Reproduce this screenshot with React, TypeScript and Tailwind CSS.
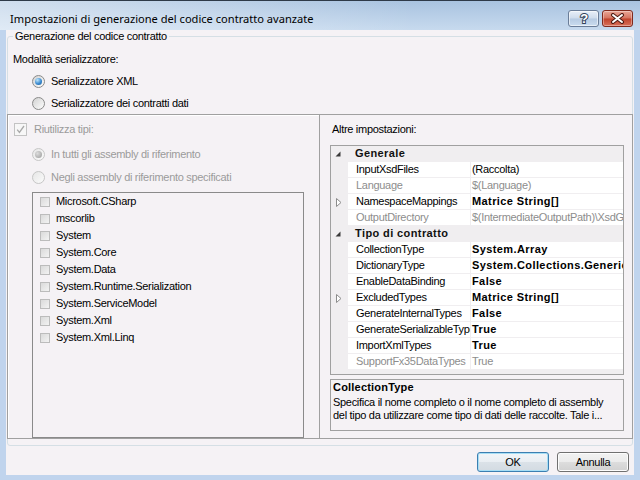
import React from "react";

function Radio({ checked = false, disabled = false }: { checked?: boolean; disabled?: boolean }) {
  return (
    <span
      className={`w-[13px] h-[13px] shrink-0 rounded-full border flex items-center justify-center ${
        disabled
          ? "border-[#c6c6c6] bg-[linear-gradient(135deg,#e6e6e6,#fbfbfb)]"
          : "border-[#8a8a8a] bg-[linear-gradient(135deg,#d2d2d2,#fdfdfd)]"
      }`}
    >
      {checked && (
        <span
          className={`w-[7px] h-[7px] rounded-full ${
            disabled
              ? "bg-[radial-gradient(circle_at_35%_35%,#dcdcdc,#9a9a9a)]"
              : "bg-[radial-gradient(circle_at_35%_30%,#bfe7fc,#3b8ad0_55%,#1a5a95)]"
          }`}
        />
      )}
    </span>
  );
}

const assemblies = [
  "Microsoft.CSharp",
  "mscorlib",
  "System",
  "System.Core",
  "System.Data",
  "System.Runtime.Serialization",
  "System.ServiceModel",
  "System.Xml",
  "System.Xml.Linq",
];

type Row =
  | { cat: string }
  | { name: string; value: string; bold?: boolean; dis?: boolean; exp?: boolean };

const rows: Row[] = [
  { cat: "Generale" },
  { name: "InputXsdFiles", value: "(Raccolta)" },
  { name: "Language", value: "$(Language)", dis: true },
  { name: "NamespaceMappings", value: "Matrice String[]", bold: true, exp: true },
  { name: "OutputDirectory", value: "$(IntermediateOutputPath)\\XsdGeneratedCode", dis: true },
  { cat: "Tipo di contratto" },
  { name: "CollectionType", value: "System.Array", bold: true },
  { name: "DictionaryType", value: "System.Collections.Generic.Dictionary`2", bold: true },
  { name: "EnableDataBinding", value: "False", bold: true },
  { name: "ExcludedTypes", value: "Matrice String[]", bold: true, exp: true },
  { name: "GenerateInternalTypes", value: "False", bold: true },
  { name: "GenerateSerializableTypes", value: "True", bold: true },
  { name: "ImportXmlTypes", value: "True", bold: true },
  { name: "SupportFx35DataTypes", value: "True", dis: true },
];

function GridRow({ r }: { r: Row }) {
  if ("cat" in r) {
    return (
      <div className="h-[16px] flex items-center bg-[#f0eef0] border-b border-[#f0eef0]">
        <div className="w-[17px] pl-[4px] flex items-center">
          <svg width="6" height="6" viewBox="0 0 6 6">
            <polygon points="5.5,0.5 5.5,5.5 0.5,5.5" fill="#3a3a3a" />
          </svg>
        </div>
        <div className="pl-[7px] font-bold tracking-[0.4px] text-[#111] leading-[15px]">{r.cat}</div>
      </div>
    );
  }
  return (
    <div className="h-[16px] flex bg-[#f0eef0]">
      <div className="w-[17px] shrink-0 pl-[5px] flex items-center">
        {r.exp && (
          <svg width="6" height="9" viewBox="0 0 6 9">
            <polygon points="0.5,0.5 5,4.5 0.5,8.5" fill="#fff" stroke="#8c8c8c" strokeWidth="1" />
          </svg>
        )}
      </div>
      <div className="w-[122px] shrink-0 h-[15px] bg-white overflow-hidden whitespace-nowrap pl-[8px] leading-[15px]">
        <span className={r.dis ? "text-[#8d8d8d]" : "text-black"}>{r.name}</span>
      </div>
      <div className="w-px h-[15px] bg-[#f0eef0] shrink-0" />
      <div
        className={`flex-1 min-w-0 h-[15px] bg-white overflow-hidden whitespace-nowrap pl-[1px] leading-[15px] ${
          r.bold ? "font-bold tracking-[0.4px] text-black" : r.dis ? "text-[#8d8d8d]" : "text-black"
        }`}
      >
        {r.value}
      </div>
    </div>
  );
}

export default function App() {
  return (
    <div className="w-[640px] h-[480px] flex flex-col overflow-hidden bg-[#c0d4ed] font-['Liberation_Sans',Arial,sans-serif] text-[11px] tracking-[-0.3px] text-black">
      {/* title bar */}
      <div className="h-[30px] shrink-0 flex items-start border-t border-[#2e3a48] bg-[linear-gradient(to_right,rgba(255,255,255,0.45),rgba(255,255,255,0)_65%),linear-gradient(to_bottom,#a9c3e0,#c7daee)] pl-[10px] pr-[7px]">
        <div className="pt-[10px] text-[11.1px] tracking-normal leading-[16px] font-['Noto_Sans',sans-serif] text-black whitespace-nowrap">
          Impostazioni di generazione del codice contratto avanzate
        </div>
        <div className="ml-auto flex gap-[3px] pt-[9px]">
          <div className="w-[31px] h-[17px] rounded-[3px] border border-[#6a7d98] bg-[linear-gradient(to_bottom,#e8eff8,#cfdcec_48%,#b6cae2_52%,#cadcef)] shadow-[inset_0_0_0_1px_rgba(255,255,255,0.55)] flex items-center justify-center">
            <svg width="12" height="15" viewBox="0 0 12 15">
              <text
                x="6"
                y="12"
                textAnchor="middle"
                fontFamily="Liberation Sans, Arial, sans-serif"
                fontWeight="bold"
                fontSize="13"
                fill="#ffffff"
                stroke="#33435a"
                strokeWidth="2"
                paintOrder="stroke"
              >
                ?
              </text>
            </svg>
          </div>
          <div className="w-[31px] h-[17px] rounded-[3px] border border-[#7f2a1e] bg-[linear-gradient(to_bottom,#eaa797,#d5735f_48%,#c0432c_52%,#d87059)] shadow-[inset_0_0_0_1px_rgba(255,255,255,0.35)] flex items-center justify-center">
            <svg width="15" height="11" viewBox="0 0 15 11">
              <path d="M3 2 L12 9 M12 2 L3 9" stroke="#4d1a12" strokeWidth="4" strokeLinecap="round" />
              <path d="M3 2 L12 9 M12 2 L3 9" stroke="#ffffff" strokeWidth="2" strokeLinecap="round" />
            </svg>
          </div>
        </div>
      </div>

      {/* client area */}
      <div className="h-[445px] mx-[6px] bg-[#f5f2f5] flex flex-col">
        <fieldset className="ml-[1px] w-[626px] h-[416px] m-0 p-0 min-w-0 border border-[#d5dfe5] rounded-[3px] flex flex-col">
          <legend className="ml-[5px] px-[2px] leading-[13px]">Generazione del codice contratto</legend>

          {/* serializer section */}
          <div className="h-[71px] shrink-0 flex flex-col pl-[5px]">
            <div className="mt-[10px] leading-[13px]">Modalità serializzatore:</div>
            <div className="mt-[4px] h-[22px] flex items-center pl-[19px] gap-[6px]">
              <Radio checked />
              <span>Serializzatore XML</span>
            </div>
            <div className="h-[22px] flex items-center pl-[19px] gap-[6px]">
              <Radio />
              <span>Serializzatore dei contratti dati</span>
            </div>
          </div>

          {/* split */}
          <div className="flex-1 flex -mx-px -mb-px">
            {/* left panel */}
            <div className="w-[313px] shrink-0 border border-[#a0a0a0] shadow-[inset_1px_1px_0_#ffffff] flex flex-col">
              <div className="mt-[8px] h-[13px] flex items-center pl-[6px] gap-[7px]">
                <span className="w-[13px] h-[13px] border border-[#c3c3c3] bg-[#f7f7f7] flex items-center justify-center">
                  <svg width="9" height="9" viewBox="0 0 9 9">
                    <path d="M1.2 4.6 L3.4 7.4 L8 1" fill="none" stroke="#a9a9a9" strokeWidth="1.3" />
                  </svg>
                </span>
                <span className="text-[#9b9b9b]">Riutilizza tipi:</span>
              </div>
              <div className="mt-[12px] h-[13px] flex items-center pl-[24px] gap-[6px]">
                <Radio checked disabled />
                <span className="text-[#9b9b9b]">In tutti gli assembly di riferimento</span>
              </div>
              <div className="mt-[10px] h-[13px] flex items-center pl-[24px] gap-[6px]">
                <Radio disabled />
                <span className="text-[#9b9b9b]">Negli assembly di riferimento specificati</span>
              </div>
              <div className="mt-[8px] ml-[24px] w-[272px] h-[246px] border border-[#8a8a8a] flex flex-col">
                {assemblies.map((a) => (
                  <div key={a} className="h-[17px] flex items-center pl-[7px] gap-[6px]">
                    <span className="w-[10px] h-[10px] border border-[#bcbcbc] bg-[linear-gradient(135deg,#dadada,#f3f3f3)]" />
                    <span className="leading-[13px]">{a}</span>
                  </div>
                ))}
              </div>
            </div>

            {/* right panel */}
            <div className="flex-1 border border-l-0 border-[#a0a0a0] flex flex-col">
              <div className="mt-[8px] pl-[12px] leading-[13px]">Altre impostazioni:</div>
              <div className="mt-[9px] ml-[10px] w-[294px] h-[230px] border border-[#a0a0a0] bg-[#f0eef0] flex flex-col overflow-hidden">
                {rows.map((r, i) => (
                  <GridRow key={i} r={r} />
                ))}
              </div>
              <div className="mt-[4px] ml-[10px] w-[294px] h-[52px] border border-[#a0a0a0] pl-[2px] flex flex-col whitespace-nowrap overflow-hidden">
                <div className="font-bold tracking-[0.2px] leading-[14px]">CollectionType</div>
                <div className="mt-[2px] leading-[13px]">Specifica il nome completo o il nome completo di assembly</div>
                <div className="leading-[13px]">del tipo da utilizzare come tipo di dati delle raccolte. Tale i...</div>
              </div>
            </div>
          </div>
        </fieldset>

        {/* buttons */}
        <div className="mt-[6px] flex justify-end gap-[8px] pr-[5px]">
          <button className="w-[72px] h-[20px] rounded-[3px] border border-[#3c7fb1] bg-[linear-gradient(to_bottom,#f2f5f8,#e9eef3_50%,#dbe2e8_50%,#d3dbe2)] shadow-[inset_0_0_0_1px_#a6def5] leading-[16px] text-black">
            OK
          </button>
          <button className="w-[72px] h-[20px] rounded-[3px] border border-[#707070] bg-[linear-gradient(to_bottom,#f2f2f2,#ebebeb_50%,#dddddd_50%,#d1d1d1)] shadow-[inset_0_0_0_1px_#fcfcfc] leading-[16px] text-black">
            Annulla
          </button>
        </div>
      </div>
    </div>
  );
}
